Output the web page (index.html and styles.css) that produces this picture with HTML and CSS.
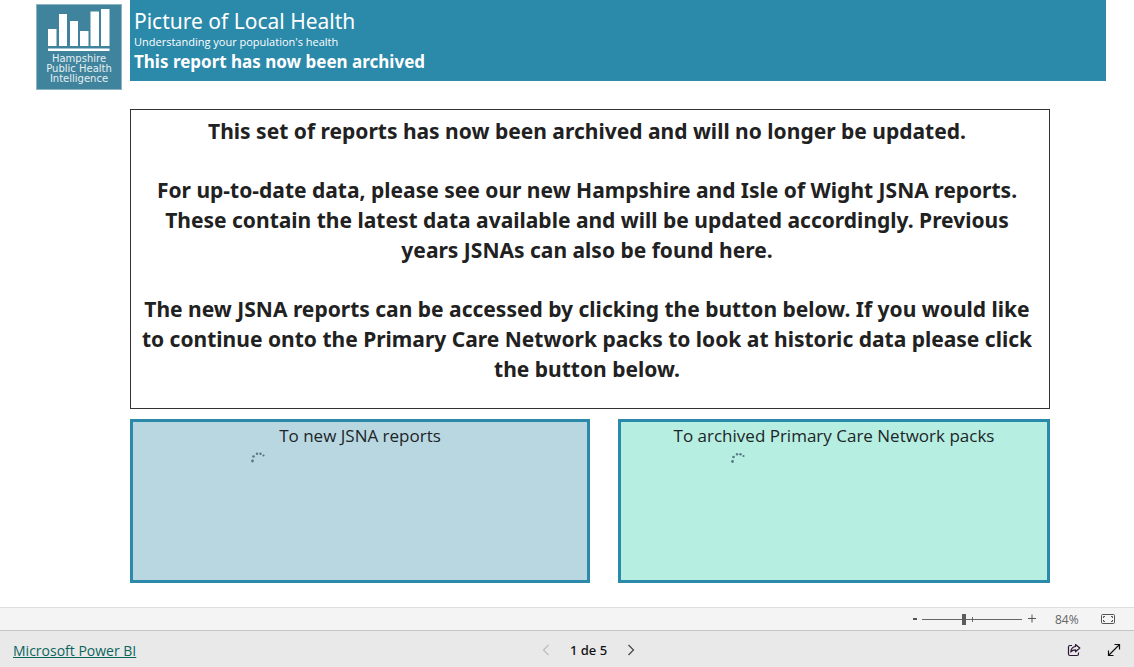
FILE: index.html
```html
<!DOCTYPE html>
<html lang="en">
<head>
<meta charset="utf-8">
<meta name="viewport" content="width=device-width, initial-scale=1">
<title>Picture of Local Health</title>
<link rel="stylesheet" href="styles.css">
</head>
<body>
<main class="report">
  <header class="header">
    <div class="logo">
      <svg class="logo-bars" viewBox="0 0 62 43" aria-hidden="true">
        <path d="M0 20h8.500v17H0zM11 5h8v32h-8zM22 12h8v25h-8zM32 22h8.500v15H32zM42.500 2.500h8.500v34.500h-8.500zM53 0h8.500v37H53zM0 39.500h61.500v2.500H0z"/>
      </svg>
      <span>Hampshire</span>
      <span>Public Health</span>
      <span>Intelligence</span>
    </div>
    <div class="banner">
      <h1 class="title">Picture of Local Health</h1>
      <p class="subtitle">Understanding your population's health</p>
      <p class="status">This report has now been archived</p>
    </div>
  </header>
  <div class="content">
    <section class="message">
      <p>This set of reports has now been archived and will no longer be updated.</p>
      <p>For up-to-date data, please see our new Hampshire and Isle of Wight JSNA reports.<br>These contain the latest data available and will be updated accordingly. Previous<br>years JSNAs can also be found here.</p>
      <p>The new JSNA reports can be accessed by clicking the button below. If you would like<br>to continue onto the Primary Care Network packs to look at historic data please click<br>the button below.</p>
    </section>
    <nav class="choices">
      <button class="choice choice-new" type="button">
        <span>To new JSNA reports</span>
        <svg class="spinner" viewBox="0 0 16 12" aria-hidden="true"><circle cx="2.500" cy="9" r="1.400"/><circle cx="3.500" cy="4.500" r="1.300"/><circle cx="7" cy="1.800" r="1.200"/><circle cx="10.500" cy="1.800" r="1.200"/><circle cx="13.500" cy="3.500" r="1.100"/></svg>
      </button>
      <button class="choice choice-archive" type="button">
        <span>To archived Primary Care Network packs</span>
        <svg class="spinner" viewBox="0 0 16 12" aria-hidden="true"><circle cx="2.500" cy="9.500" r="1.400"/><circle cx="3.500" cy="5" r="1.300"/><circle cx="7" cy="2.300" r="1.200"/><circle cx="10.500" cy="2.300" r="1.200"/><circle cx="13.500" cy="4" r="1.100"/></svg>
      </button>
    </nav>
  </div>
</main>
<div class="zoom-bar">
  <button class="zoom-step" type="button" aria-label="Zoom out"><svg width="6" height="12" viewBox="0 0 6 12"><path d="M1 6h4" stroke="#555" stroke-width="2"/></svg></button>
  <input class="zoom-range" type="range" min="10" max="190" value="85" aria-label="Zoom">
  <button class="zoom-step zoom-in" type="button" aria-label="Zoom in"><svg width="8" height="12" viewBox="0 0 8 12"><path d="M0 5.500h8M4 1.500v8" stroke="#555"/></svg></button>
  <span class="zoom-value">84%</span>
  <button class="fit" type="button" aria-label="Fit to page"><svg width="14" height="12" viewBox="0 0 14 12" fill="none" stroke="#555"><rect x=".5" y="1.500" width="13" height="9" rx="1"/><path d="M2.500 5V3.500H4M10 3.500h1.500V5M2.500 7v1.500H4M10 8.500h1.500V7"/></svg></button>
</div>
<footer class="footer">
  <a class="brand" href="#">Microsoft Power BI</a>
  <div class="pager">
    <button type="button" disabled aria-label="Previous page"><svg width="8" height="12" viewBox="0 0 8 12" fill="none" stroke="#bdbdbd" stroke-width="1.200"><path d="M6.500 1 1.500 6l5 5"/></svg></button>
    <span>1 de 5</span>
    <button type="button" aria-label="Next page"><svg width="8" height="12" viewBox="0 0 8 12" fill="none" stroke="#444" stroke-width="1.200"><path d="m1.500 1 5 5-5 5"/></svg></button>
  </div>
  <div class="actions">
    <button type="button" aria-label="Share"><svg width="14" height="14" viewBox="0 0 14 14" fill="none" stroke="#2b1735" stroke-width="1.200" stroke-linejoin="round"><path d="M5 2.500H3Q1.500 2.500 1.500 4v7Q1.500 12.500 3 12.500h7q1.500 0 1.500-1.500V9.500"/><path d="M8.500 1.500 12.800 5 8.500 8.800V6.800Q5.500 6.800 3.800 9 4.200 4 8.500 3.500z"/></svg></button>
    <button type="button" aria-label="Full screen"><svg width="14" height="14" viewBox="0 0 14 14" fill="none" stroke="#111" stroke-width="1.200"><path d="M1.500 12.500l11-11M7.500 1.500h5v5M1.500 7.500v5h5"/></svg></button>
  </div>
</footer>
</body>
</html>
```
FILE: styles.css
```css
* { box-sizing: border-box; }
body {
  margin: 0;
  min-height: 100vh;
  display: flex;
  flex-direction: column;
  background: #fff;
  color: #212121;
  font-family: "Noto Sans", "Open Sans", sans-serif;
}
h1, p { margin: 0; font-weight: 400; }
button { border: 0; padding: 0; background: none; font: inherit; color: inherit; }
svg { display: block; }

.report { flex: 1; }
.header { display: flex; align-items: flex-start; gap: 8px; padding: 0 28px 0 36px; }
.logo {
  width: 86px;
  height: 86px;
  margin-top: 4px;
  padding-top: 4px;
  display: flex;
  flex-direction: column;
  align-items: center;
  background: #3f839c;
  border: 1px solid #8db5c3;
  color: #e6f0f3;
  font-family: "DejaVu Sans", sans-serif;
  font-size: 10px;
  line-height: 10px;
  white-space: nowrap;
}
.logo-bars { width: 62px; height: 43px; margin-bottom: 2px; fill: #fff; }
.banner { flex: 1; padding: 7px 4px; height: 81px; background: #2b89aa; color: #fff; }
.title { font-size: 21px; line-height: 28px; }
.subtitle { font-family: "Open Sans", sans-serif; font-size: 11px; line-height: 14px; }
.status { font-size: 17px; line-height: 25px; font-weight: 700; }

.content { padding: 19px 84px 0 130px; }
.message {
  min-height: 300px;
  padding: 6px 8px 22px 2px;
  display: grid;
  align-content: start;
  gap: 29px;
  border: 1px solid #333;
  font-size: 21px;
  line-height: 30px;
  text-align: center;
}
.message p { font-weight: 700; }
.choices { display: grid; grid-template-columns: 460fr 432fr; gap: 28px; padding-top: 10px; }
.choice {
  height: 164px;
  padding: 2px 0 0;
  display: flex;
  flex-direction: column;
  align-items: center;
  border: 3px solid #2b89aa;
  font-family: "Open Sans", "Noto Sans", sans-serif;
  font-size: 17px;
  font-weight: 400;
  line-height: 24px;
  color: #1c2528;
}
.choice-new { background: #b9d7e1; }
.choice-archive { background: #b6efe1; }
.spinner { width: 16px; height: 12px; margin: 4px 204px 0 0; fill: #557983; }
.choice-archive .spinner { margin-right: 192px; }

.zoom-bar {
  height: 23px;
  padding-right: 19px;
  display: flex;
  align-items: center;
  justify-content: flex-end;
  background: #f4f4f4;
  border-top: 1px solid #dedede;
  color: #666;
  font-size: 12px;
}
.zoom-range {
  width: 100px;
  height: 16px;
  margin: 0 6px 0 4px;
  appearance: none;
  background:
    linear-gradient(#666, #666) 50px 6px / 1px 5px no-repeat,
    linear-gradient(#666, #666) 0 8px / 100% 1px no-repeat;
}
.zoom-range::-webkit-slider-thumb { appearance: none; width: 4px; height: 11px; background: #5c5c5c; }
.zoom-value { width: 62px; margin-left: 3px; padding-left: 16px; font-family: "Open Sans", sans-serif; }

.footer {
  height: 37px;
  padding: 2px 13px 0;
  display: grid;
  grid-template-columns: 1fr auto 1fr;
  align-items: center;
  background: #e9e9e9;
  border-top: 1px solid #c4c4c4;
  font-size: 13px;
}
.brand { justify-self: start; color: #0b655c; font-family: "Open Sans", sans-serif; font-size: 14px; }
.pager { display: flex; align-items: center; gap: 20px; padding-left: 43px; color: #111; font-weight: 500; }
.actions { justify-self: end; display: flex; gap: 26px; }
```
